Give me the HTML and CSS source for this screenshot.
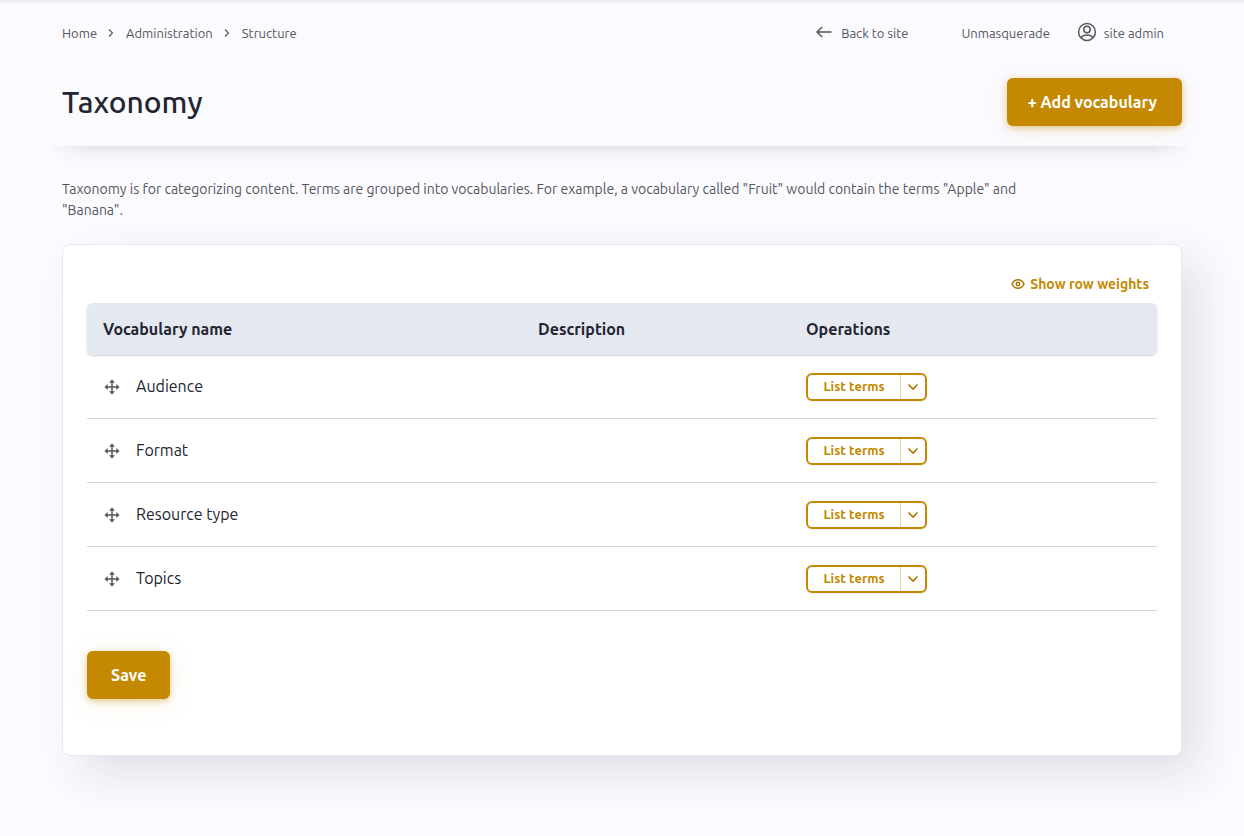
FILE: index.html
```html
<!DOCTYPE html>
<html lang="en">
<head>
<meta charset="utf-8">
<meta name="viewport" content="width=device-width, initial-scale=1">
<title>Taxonomy</title>
<link rel="stylesheet" href="styles.css">
</head>
<body>
<svg class="sprite" aria-hidden="true">
  <symbol id="chevron-right" viewBox="0 0 8 10"><path d="M2 1.500 5.500 5 2 8.500" fill="none" stroke="currentColor" stroke-width="1.100"/></symbol>
  <symbol id="move" viewBox="0 0 16 16"><path d="M8 2v12M2 8h12" fill="none" stroke="currentColor" stroke-width="1.500"/><path d="M8 .5 5 3.700h6zM8 15.500l-3-3.200h6zM.5 8l3.200-3v6zM15.500 8l-3.200-3v6z" fill="currentColor"/></symbol>
  <symbol id="chevron-down" viewBox="0 0 12 8"><path d="M1.500 1.500 6 6l4.500-4.500" fill="none" stroke="currentColor" stroke-width="1.600"/></symbol>
</svg>
<div class="page">
  <header class="header">
    <div class="topbar">
      <nav aria-label="Breadcrumb">
        <ol class="breadcrumb">
          <li><a href="#">Home</a></li>
          <li><svg class="crumb-icon"><use href="#chevron-right"/></svg><a href="#">Administration</a></li>
          <li><svg class="crumb-icon"><use href="#chevron-right"/></svg><a href="#">Structure</a></li>
        </ol>
      </nav>
      <nav class="account" aria-label="Account">
        <a class="back" href="#"><svg class="back-icon" viewBox="0 0 16 12"><path d="M6 1 1 6l5 5M1 6h14.500" fill="none" stroke="currentColor" stroke-width="1.500"/></svg>Back to site</a>
        <a href="#">Unmasquerade</a>
        <a class="user" href="#"><svg class="user-icon" viewBox="0 0 20 20"><g fill="none" stroke="currentColor" stroke-width="1.500"><circle cx="10" cy="10" r="8.400"/><circle cx="10" cy="7.500" r="3.200"/><path d="M4.300 15.800C5.300 13.700 7.200 12.900 10 12.900s4.700.8 5.700 2.900"/></g></svg>site admin</a>
      </nav>
    </div>
    <div class="titlebar">
      <h1 class="title">Taxonomy</h1>
      <button class="button add" type="button">+ Add vocabulary</button>
    </div>
  </header>
  <main>
    <p class="help">Taxonomy is for categorizing content. Terms are grouped into vocabularies. For example, a vocabulary called "Fruit" would contain the terms "Apple" and "Banana".</p>
    <form class="card">
      <button class="weights" type="button"><svg class="eye" viewBox="0 0 14 12"><g fill="none" stroke="currentColor" stroke-width="1.500"><path d="M1 6C2.200 3.300 4.300 1.700 7 1.700S11.800 3.300 13 6c-1.200 2.700-3.300 4.300-6 4.300S2.200 8.700 1 6z"/><circle cx="7" cy="6" r="1.700"/></g></svg>Show row weights</button>
      <table class="table">
        <thead><tr><th class="name" scope="col">Vocabulary name</th><th class="desc" scope="col">Description</th><th scope="col">Operations</th></tr></thead>
        <tbody>
          <tr><td><div class="term"><svg class="move"><use href="#move"/></svg>Audience</div></td><td></td><td><div class="split"><button class="list" type="button">List terms</button><button class="more" type="button" aria-label="More actions for Audience"><svg class="down"><use href="#chevron-down"/></svg></button></div></td></tr>
          <tr><td><div class="term"><svg class="move"><use href="#move"/></svg>Format</div></td><td></td><td><div class="split"><button class="list" type="button">List terms</button><button class="more" type="button" aria-label="More actions for Format"><svg class="down"><use href="#chevron-down"/></svg></button></div></td></tr>
          <tr><td><div class="term"><svg class="move"><use href="#move"/></svg>Resource type</div></td><td></td><td><div class="split"><button class="list" type="button">List terms</button><button class="more" type="button" aria-label="More actions for Resource type"><svg class="down"><use href="#chevron-down"/></svg></button></div></td></tr>
          <tr><td><div class="term"><svg class="move"><use href="#move"/></svg>Topics</div></td><td></td><td><div class="split"><button class="list" type="button">List terms</button><button class="more" type="button" aria-label="More actions for Topics"><svg class="down"><use href="#chevron-down"/></svg></button></div></td></tr>
        </tbody>
      </table>
      <button class="button save" type="submit">Save</button>
    </form>
  </main>
</div>
</body>
</html>
```
FILE: styles.css
```css
* { box-sizing: border-box; }
body {
  margin: 0;
  min-height: 100vh;
  background: #fbfaff linear-gradient(#e8e8ed, #fbfaff) top / 100% 4px no-repeat;
  color: #232530;
  font-family: Ubuntu, "Noto Sans", sans-serif;
  font-size: 16px;
  line-height: 24px;
}
button { font: inherit; cursor: pointer; }
a { color: inherit; text-decoration: none; }
svg { flex: none; }
.sprite { position: absolute; width: 0; height: 0; }
.page { padding: 0 62px 80px; }
.header { position: relative; height: 146px; }
.header::after {
  content: "";
  position: absolute;
  top: 100%;
  left: -12px;
  right: -12px;
  height: 24px;
  background: linear-gradient(#e4e4e9, #f2f2f6 30%, #f8f8fc 60%, #fbfaff);
  -webkit-mask-image: linear-gradient(90deg, transparent, #000 40px, #000 calc(100% - 40px), transparent);
  mask-image: linear-gradient(90deg, transparent, #000 40px, #000 calc(100% - 40px), transparent);
}
.topbar {
  display: flex;
  align-items: center;
  justify-content: space-between;
  padding: 21px 18px 0 0;
  color: #55565f;
  font-size: 13px;
}
.breadcrumb { display: flex; margin: 0; padding: 0; list-style: none; }
.breadcrumb li { display: flex; align-items: center; }
.crumb-icon { width: 8px; height: 10px; margin: 0 11px 0 10px; }
.account { display: flex; align-items: center; }
.back, .user { display: flex; align-items: center; }
.back { margin-right: 53px; }
.back-icon { width: 16px; height: 12px; margin: 0 9px 2px 0; }
.user { margin-left: 27px; }
.user-icon { width: 20px; height: 20px; margin: 0 7px 2px 0; }
.titlebar {
  display: flex;
  align-items: center;
  justify-content: space-between;
  padding-top: 33px;
}
.title { margin: 0; font-size: 30px; line-height: 40px; font-weight: 550; }
.button {
  height: 48px;
  border: 0;
  border-radius: 6px;
  background: #c48900;
  color: #fff;
  font-weight: 700;
  box-shadow: 0 2px 6px rgba(196, 137, 0, .4), 0 4px 24px rgba(196, 137, 0, .12);
}
.add { padding: 0 25px 0 21px; }
.help {
  max-width: 980px;
  margin: 0;
  padding: 33px 0 23px;
  color: #55565f;
  font-size: 14px;
  line-height: 21px;
}
.card {
  display: flex;
  flex-direction: column;
  align-items: flex-start;
  padding: 24px 24px 56px;
  border: 1px solid #e9e9ed;
  border-radius: 8px;
  background: #fff;
  box-shadow: 18px 18px 44px rgba(34, 51, 60, .12);
}
.weights {
  display: flex;
  align-items: center;
  align-self: flex-end;
  height: 30px;
  margin-bottom: 4px;
  padding: 0 8px;
  border: 0;
  background: none;
  color: #c48900;
  font-size: 14px;
  font-weight: 700;
}
.eye { width: 14px; height: 12px; margin-right: 5px; color: #a87600; }
.table { width: 100%; border-spacing: 0; table-layout: fixed; }
.table thead tr { border-radius: 6px; box-shadow: 0 1px 2px rgba(0, 0, 0, .2); }
.table th { height: 52px; padding: 0 16px; background: #e4e8f0; text-align: left; }
.table th:first-child { border-radius: 6px 0 0 6px; }
.table th:last-child { border-radius: 0 6px 6px 0; }
.name { width: 435px; }
.desc { width: 268px; }
.table td { height: 64px; padding: 0 16px; border-bottom: 1px solid #d3d4d9; }
.term { display: flex; align-items: flex-end; gap: 16px; padding-bottom: 2px; line-height: 22px; }
.move { width: 16px; height: 16px; margin: 0 0 2px 1px; color: #55565f; }
.split {
  display: inline-flex;
  width: 121px;
  height: 28px;
  border: 2px solid #c48900;
  border-radius: 6px;
  vertical-align: middle;
  box-shadow: 0 1px 2px rgba(0, 0, 0, .08);
}
.split button { padding: 0; border: 0; background: none; }
.split .list { flex: 1; padding-bottom: 2px; color: #c48900; font-size: 13px; line-height: 22px; font-weight: 700; }
.split .more { display: grid; place-items: center; width: 25px; border-left: 1px solid #ebd4a0; }
.down { width: 12px; height: 8px; color: #a87600; }
.save { padding: 0 24px; margin-top: 40px; }
```
